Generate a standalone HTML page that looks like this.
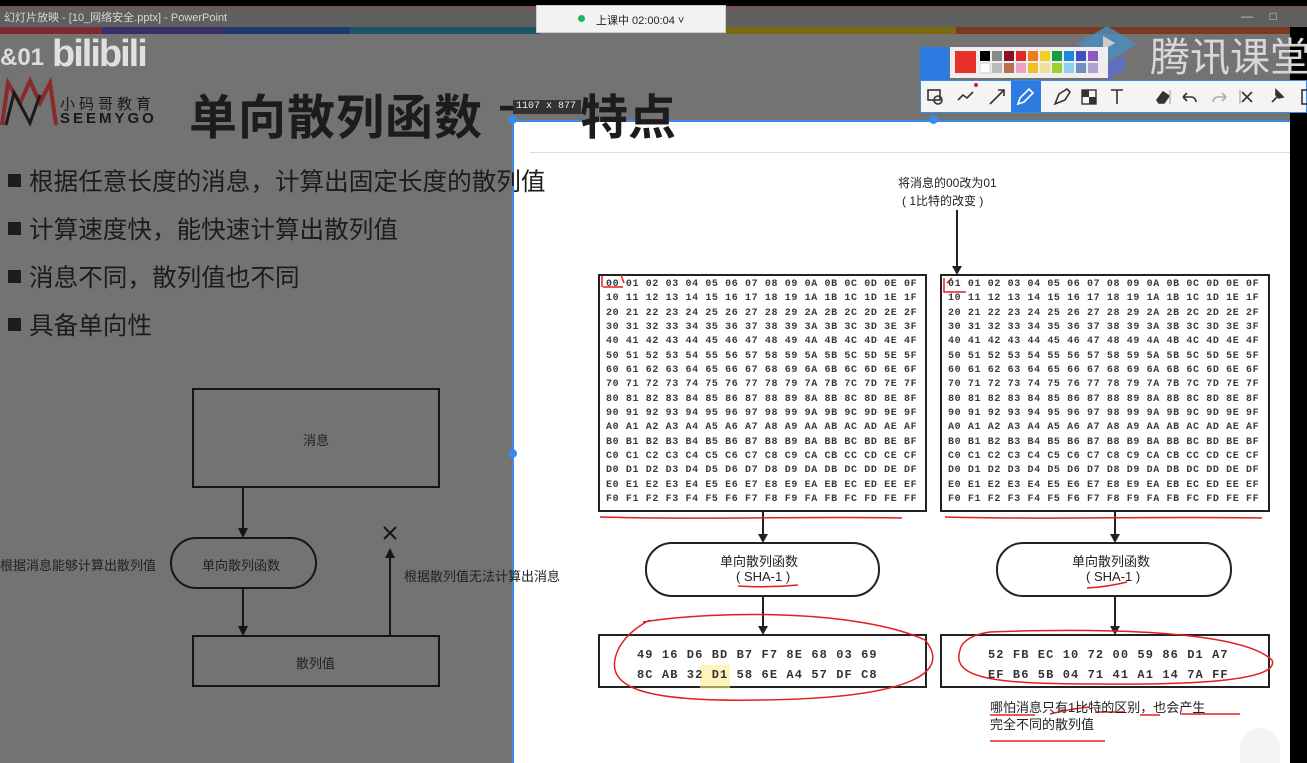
<!DOCTYPE html>
<html><head><meta charset="utf-8"><style>
*{margin:0;padding:0;box-sizing:border-box}
body{width:1307px;height:763px;overflow:hidden;background:#737373;position:relative;font-family:"Liberation Sans","Noto Sans CJK SC",sans-serif}
.a{position:absolute}
.hex{position:absolute;font-family:"Liberation Mono",monospace;font-size:10px;color:#3a3a3a;letter-spacing:0.62px;line-height:14.35px;white-space:pre;font-weight:bold}
.bul{position:absolute;left:8px;font-size:24.6px;color:#1c1c1c;white-space:nowrap;z-index:5}
.bul:before{content:"";display:inline-block;width:13px;height:13px;background:#1c1c1c;margin-right:8px;vertical-align:3px}
</style></head><body>
<div class="a" style="left:0;top:0;width:1307px;height:6px;background:#000"></div>
<div class="a" style="left:0;top:6px;width:1307px;height:1px;background:#a33"></div>
<div class="a" style="left:0;top:7px;width:1307px;height:20px;background:#5f5f5f"></div>
<div class="a" style="left:4px;top:9px;font-size:11px;color:#d8d8d8">幻灯片放映 - [10_网络安全.pptx] - PowerPoint</div>
<div class="a" style="left:0;top:27px;width:102px;height:7px;background:#7a2a30"></div>
<div class="a" style="left:102px;top:27px;width:123px;height:7px;background:#3b2d66"></div>
<div class="a" style="left:225px;top:27px;width:125px;height:7px;background:#1c3a6e"></div>
<div class="a" style="left:350px;top:27px;width:190px;height:7px;background:#1e5566"></div>
<div class="a" style="left:726px;top:27px;width:230px;height:7px;background:#7a6a10"></div>
<div class="a" style="left:956px;top:27px;width:334px;height:7px;background:#7a3a20"></div>
<div class="a" style="left:1290px;top:27px;width:17px;height:736px;background:#000"></div>
<div class="a" style="left:1241px;top:9px;font-size:12px;color:#ccc">—&nbsp;&nbsp;&nbsp;&nbsp;&nbsp;□</div>
<div class="a" style="left:536px;top:5px;width:190px;height:28px;background:#f2f2f2;border:1px solid #ccc"></div>
<div class="a" style="left:578px;top:15px;width:7px;height:7px;border-radius:50%;background:#1db85a"></div>
<div class="a" style="left:596px;top:12px;font-size:11px;color:#222">上课中 02:00:04 ˅</div>
<div class="a" style="left:0;top:44px;font-size:24px;color:#ddd;font-weight:bold">&amp;01</div>
<div class="a" style="left:52px;top:33px;font-size:38px;color:#e0e0e0;font-weight:bold;letter-spacing:-2px">bilibili</div>
<svg class="a" style="left:0;top:75px" width="60" height="52"><path d="M2 50 L8 8 L20 28 L30 6 L40 28 L50 8 L56 50" fill="none" stroke="#8a2a2a" stroke-width="4"/><path d="M6 50 L14 18 L30 48 L40 20" fill="none" stroke="#1a1a1a" stroke-width="3"/></svg>
<div class="a" style="left:60px;top:93px;font-size:15px;color:#1a1a1a;letter-spacing:4px">小码哥教育</div>
<div class="a" style="left:60px;top:110px;font-size:15px;color:#1a1a1a;letter-spacing:3px;font-weight:bold">SEEMYGO</div>
<div class="a" style="left:189px;top:78px;font-size:48px;color:#1c1c1c;font-weight:bold;letter-spacing:1px">单向散列函数</div>
<div class="a" style="left:500px;top:78px;font-size:48px;color:#1c1c1c;font-weight:bold">—</div>
<div class="bul" style="top:162px">根据任意长度的消息，计算出固定长度的散列值</div>
<div class="bul" style="top:210px">计算速度快，能快速计算出散列值</div>
<div class="bul" style="top:258px">消息不同，散列值也不同</div>
<div class="bul" style="top:306px">具备单向性</div>
<svg class="a" style="left:0;top:0" width="512" height="763">
<rect x="193" y="389" width="246" height="98" fill="none" stroke="#151515" stroke-width="2"/>
<rect x="171" y="538" width="145" height="50" rx="25" fill="none" stroke="#151515" stroke-width="2"/>
<rect x="193" y="636" width="246" height="50" fill="none" stroke="#151515" stroke-width="2"/>
<path d="M243 487V530M243 588V628M390 636V556" stroke="#151515" stroke-width="2"/>
<path d="M238 528h10l-5 10zM238 626h10l-5 10zM385 558h10l-5-10z" fill="#151515"/>
<path d="M384 527l12 12M396 527l-12 12" stroke="#151515" stroke-width="2"/>
</svg>
<div class="a" style="left:303px;top:430px;font-size:13px;color:#222">消息</div>
<div class="a" style="left:202px;top:555px;font-size:13px;color:#222">单向散列函数</div>
<div class="a" style="left:296px;top:653px;font-size:13px;color:#222">散列值</div>
<div class="a" style="left:0;top:555px;font-size:13px;color:#222">根据消息能够计算出散列值</div>
<div class="a" style="left:512px;top:120px;width:778px;height:643px;background:#fff;border-left:2px solid #3b8ae6;border-top:2px solid #3b8ae6"></div>
<div class="a" style="left:580px;top:78px;font-size:48px;color:#1c1c1c;font-weight:bold;z-index:5">特点</div>
<div class="a" style="left:404px;top:566px;font-size:13px;color:#222;z-index:5">根据散列值无法计算出消息</div>
<div class="a" style="left:513px;top:100px;width:68px;height:14px;background:#333;color:#eee;font-family:'Liberation Mono',monospace;font-size:10px;line-height:14px;padding-left:3px;z-index:6">1107 x 877</div>
<div class="a" style="left:508px;top:115px;width:9px;height:9px;border-radius:50%;background:#3b8ae6;z-index:6"></div>
<div class="a" style="left:929px;top:115px;width:9px;height:9px;border-radius:50%;background:#3b8ae6"></div>
<div class="a" style="left:508px;top:449px;width:9px;height:9px;border-radius:50%;background:#3b8ae6"></div>
<div class="a" style="left:530px;top:152px;width:760px;height:1px;background:#ddd"></div>
<div class="a" style="left:898px;top:174px;font-size:12px;color:#222">将消息的00改为01</div>
<div class="a" style="left:902px;top:192px;font-size:12px;color:#222">( 1比特的改变 )</div>
<svg class="a" style="left:0;top:0" width="1290" height="763">
<g stroke="#222" stroke-width="2" fill="none">
<rect x="599" y="275" width="327" height="236"/>
<rect x="941" y="275" width="328" height="236"/>
<rect x="646" y="543" width="233" height="53" rx="26"/>
<rect x="997" y="543" width="234" height="53" rx="26"/>
<rect x="599" y="635" width="327" height="52"/>
<rect x="941" y="635" width="328" height="52"/>
<path d="M957 210V266M763 511V535M1115 511V535M763 596V627M1115 596V627"/>
</g>
<g fill="#222"><path d="M952 266h10l-5 9zM758 534h10l-5 9zM1110 534h10l-5 9zM758 626h10l-5 9zM1110 626h10l-5 9z"/></g>
<rect x="700" y="665" width="30" height="24" fill="#ffef90" opacity="0.6"/>
<g stroke="#e02020" stroke-width="1.5" fill="none">
<path d="M603 287h20M602 276v11M621 275l3 8"/>
<path d="M944 278v14h22M947 283l5-5"/>
<path d="M600 517C700 520 820 516 902 518M945 517C1050 520 1150 516 1262 518"/>
<path d="M738 586q30 2 60 -1M1087 588q20 -1 40 -6"/>
<path d="M643 622C720 610 860 610 925 640C950 670 920 698 760 700C650 702 600 690 618 650C625 635 640 625 650 620"/>
<path d="M990 632C1100 628 1240 630 1272 660C1280 680 1200 685 1100 684C1000 684 950 680 960 650C962 640 975 634 990 632"/>
<path d="M990 715h45M1050 714q25 -6 40 -7M1095 712h30M1140 715h20M1180 714h60M990 741h115"/>
</g>
</svg>
<div class="hex" style="left:606px;top:278px">00 01 02 03 04 05 06 07 08 09 0A 0B 0C 0D 0E 0F
10 11 12 13 14 15 16 17 18 19 1A 1B 1C 1D 1E 1F
20 21 22 23 24 25 26 27 28 29 2A 2B 2C 2D 2E 2F
30 31 32 33 34 35 36 37 38 39 3A 3B 3C 3D 3E 3F
40 41 42 43 44 45 46 47 48 49 4A 4B 4C 4D 4E 4F
50 51 52 53 54 55 56 57 58 59 5A 5B 5C 5D 5E 5F
60 61 62 63 64 65 66 67 68 69 6A 6B 6C 6D 6E 6F
70 71 72 73 74 75 76 77 78 79 7A 7B 7C 7D 7E 7F
80 81 82 83 84 85 86 87 88 89 8A 8B 8C 8D 8E 8F
90 91 92 93 94 95 96 97 98 99 9A 9B 9C 9D 9E 9F
A0 A1 A2 A3 A4 A5 A6 A7 A8 A9 AA AB AC AD AE AF
B0 B1 B2 B3 B4 B5 B6 B7 B8 B9 BA BB BC BD BE BF
C0 C1 C2 C3 C4 C5 C6 C7 C8 C9 CA CB CC CD CE CF
D0 D1 D2 D3 D4 D5 D6 D7 D8 D9 DA DB DC DD DE DF
E0 E1 E2 E3 E4 E5 E6 E7 E8 E9 EA EB EC ED EE EF
F0 F1 F2 F3 F4 F5 F6 F7 F8 F9 FA FB FC FD FE FF</div>
<div class="hex" style="left:948px;top:278px">01 01 02 03 04 05 06 07 08 09 0A 0B 0C 0D 0E 0F
10 11 12 13 14 15 16 17 18 19 1A 1B 1C 1D 1E 1F
20 21 22 23 24 25 26 27 28 29 2A 2B 2C 2D 2E 2F
30 31 32 33 34 35 36 37 38 39 3A 3B 3C 3D 3E 3F
40 41 42 43 44 45 46 47 48 49 4A 4B 4C 4D 4E 4F
50 51 52 53 54 55 56 57 58 59 5A 5B 5C 5D 5E 5F
60 61 62 63 64 65 66 67 68 69 6A 6B 6C 6D 6E 6F
70 71 72 73 74 75 76 77 78 79 7A 7B 7C 7D 7E 7F
80 81 82 83 84 85 86 87 88 89 8A 8B 8C 8D 8E 8F
90 91 92 93 94 95 96 97 98 99 9A 9B 9C 9D 9E 9F
A0 A1 A2 A3 A4 A5 A6 A7 A8 A9 AA AB AC AD AE AF
B0 B1 B2 B3 B4 B5 B6 B7 B8 B9 BA BB BC BD BE BF
C0 C1 C2 C3 C4 C5 C6 C7 C8 C9 CA CB CC CD CE CF
D0 D1 D2 D3 D4 D5 D6 D7 D8 D9 DA DB DC DD DE DF
E0 E1 E2 E3 E4 E5 E6 E7 E8 E9 EA EB EC ED EE EF
F0 F1 F2 F3 F4 F5 F6 F7 F8 F9 FA FB FC FD FE FF</div>
<div class="a" style="left:720px;top:551px;font-size:13px;color:#222">单向散列函数</div>
<div class="a" style="left:736px;top:569px;font-size:13px;color:#222">( SHA-1 )</div>
<div class="a" style="left:1072px;top:551px;font-size:13px;color:#222">单向散列函数</div>
<div class="a" style="left:1086px;top:569px;font-size:13px;color:#222">( SHA-1 )</div>
<div class="hex" style="left:637px;top:645px;font-size:12px;line-height:20px;color:#333;letter-spacing:1.1px">49 16 D6 BD B7 F7 8E 68 03 69
8C AB 32 D1 58 6E A4 57 DF C8</div>
<div class="hex" style="left:988px;top:645px;font-size:12px;line-height:20px;color:#333;letter-spacing:1.1px">52 FB EC 10 72 00 59 86 D1 A7
EF B6 5B 04 71 41 A1 14 7A FF</div>
<div class="a" style="left:990px;top:697px;font-size:13px;color:#222">哪怕消息只有1比特的区别，也会产生</div>
<div class="a" style="left:990px;top:714px;font-size:13px;color:#222">完全不同的散列值</div>
<svg class="a" style="left:1075px;top:22px" width="70" height="60"><path d="M2 22L32 4L62 22L32 40Z" fill="#4a8ec2" opacity=".8"/><path d="M14 32v16l18 10l18-10V32L32 42Z" fill="#5a6ed0" opacity=".8"/><path d="M28 14v14l12-7z" fill="#ccc"/></svg>
<div class="a" style="left:1150px;top:25px;font-size:40px;color:#d8d8d8;white-space:nowrap">腾讯课堂</div>
<div class="a" style="left:920px;top:47px;width:29px;height:33px;background:#2b7be0"></div>
<div class="a" style="left:950px;top:47px;width:158px;height:31px;background:#eee"></div>
<div class="a" style="left:955px;top:51px;width:21px;height:22px;background:#e8302a"></div>
<svg class="a" style="left:980px;top:51px" width="126" height="24">
<rect x="0" y="0" width="10" height="10" fill="#000"/><rect x="12" y="0" width="10" height="10" fill="#888"/><rect x="24" y="0" width="10" height="10" fill="#8b1020"/><rect x="36" y="0" width="10" height="10" fill="#e02a2a"/><rect x="48" y="0" width="10" height="10" fill="#f07a20"/><rect x="60" y="0" width="10" height="10" fill="#f0d020"/><rect x="72" y="0" width="10" height="10" fill="#1a9a40"/><rect x="84" y="0" width="10" height="10" fill="#1a8ae0"/><rect x="96" y="0" width="10" height="10" fill="#4050c0"/><rect x="108" y="0" width="10" height="10" fill="#8a5ac0"/>
<rect x="0" y="12" width="10" height="10" fill="#fff" stroke="#ccc"/><rect x="12" y="12" width="10" height="10" fill="#bbb"/><rect x="24" y="12" width="10" height="10" fill="#b87050"/><rect x="36" y="12" width="10" height="10" fill="#f0a0c0"/><rect x="48" y="12" width="10" height="10" fill="#f0c020"/><rect x="60" y="12" width="10" height="10" fill="#f0e0a0"/><rect x="72" y="12" width="10" height="10" fill="#a0d030"/><rect x="84" y="12" width="10" height="10" fill="#90d0f0"/><rect x="96" y="12" width="10" height="10" fill="#7090c0"/><rect x="108" y="12" width="10" height="10" fill="#b0a0d0"/>
</svg>
<div class="a" style="left:920px;top:80px;width:387px;height:33px;background:#f4f4f4;border:1px solid #3b8ae6"></div>
<div class="a" style="left:1011px;top:81px;width:30px;height:31px;background:#2b7be0"></div>
<div class="a" style="left:974px;top:83px;width:4px;height:4px;border-radius:50%;background:#e02020"></div>
<svg class="a" style="left:920px;top:80px" width="387" height="33">
<g stroke="#333" stroke-width="1.6" fill="none">
<rect x="8" y="10" width="12" height="10"/><circle cx="18" cy="20" r="4"/>
<path d="M38 20l5-5 4 3 6-6"/>
<path d="M70 24l14-14M78 10h6v6"/>
<path d="M135 24l4-10 8-5 3 3-5 8z"/>
<path d="M191 10h12M197 10v14"/>
<path d="M237 20l6-8 6 4-5 7h-5z" fill="#333"/>
<path d="M250 10v14M320 10v14" stroke="#bbb"/>
<path d="M263 17h8a5 5 0 0 1 5 5M263 17l4-4M263 17l4 4"/>
<path d="M306 17h-8a5 5 0 0 0-5 5M306 17l-4-4M306 17l-4 4" stroke="#aaa"/>
<path d="M322 12l10 10M332 12l-10 10"/>
<path d="M352 22l5-5M356 10l7 7-4 1-3-3z" fill="#333"/>
<rect x="382" y="10" width="8" height="14"/>
</g>
<path d="M98 24l2-6 9-9 4 4-9 9z" fill="none" stroke="#fff" stroke-width="1.6"/>
<rect x="162" y="10" width="7" height="7" fill="#333"/><rect x="169" y="17" width="7" height="7" fill="#333"/><rect x="162" y="10" width="14" height="14" fill="none" stroke="#333" stroke-width="1.4"/>
</svg>
<div class="a" style="left:1240px;top:728px;width:40px;height:35px;border-radius:20px 20px 0 0;background:#f4f4f4"></div>
</body></html>
